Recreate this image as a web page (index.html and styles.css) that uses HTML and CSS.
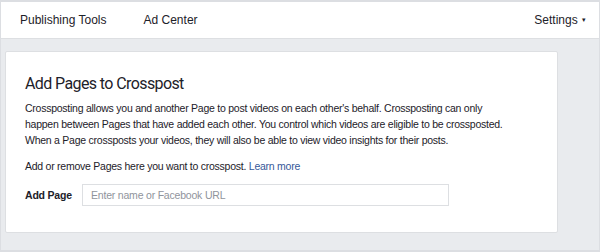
FILE: index.html
```html
<!DOCTYPE html>
<html lang="en">

<head>
    <meta charset="UTF-8">
    <title>Crosspost Settings</title>
    <link rel="stylesheet" href="styles.css">
</head>

<body>
    <div class="frame">
        <nav class="topbar">
            <a href="#" class="nav-link">Publishing Tools</a>
            <a href="#" class="nav-link">Ad Center</a>
            <a href="#" class="nav-link settings">Settings <span class="caret">&#9662;</span></a>
        </nav>

        <div class="content">
            <div class="card">
                <h1 class="card-title">Add Pages to Crosspost</h1>
                <p class="text">
                    Crossposting allows you and another Page to post videos on each other's behalf. Crossposting can only<br>
                    happen between Pages that have added each other. You control which videos are eligible to be crossposted.<br>
                    When a Page crossposts your videos, they will also be able to view video insights for their posts.
                </p>
                <p class="text">
                    Add or remove Pages here you want to crosspost. <a href="#" class="link">Learn more</a>
                </p>
                <div class="field">
                    <label for="page" class="field-label">Add Page</label>
                    <input type="text" id="page" name="page" placeholder="Enter name or Facebook URL">
                </div>
            </div>
        </div>
    </div>
</body>

</html>
```

FILE: styles.css
```css
* {
    box-sizing: border-box;
    padding: 0;
    margin: 0;
}

body {
    background-color: #dcdee2;
    font-family: "Liberation Sans", Arial, Helvetica, sans-serif;
    color: #1d2129;
    padding: 2px 1px 2px 1px;
    height: 252px;
    overflow: hidden;
}

.frame {
    background-color: #e9ebee;
    height: 248px;
}

.topbar {
    display: flex;
    align-items: center;
    height: 37px;
    padding: 0 13px 0 19px;
    background-color: white;
    border-bottom: 1px solid #dddfe2;
    font-size: 12px;
}

.nav-link {
    text-decoration: none;
    color: #1d2129;
    margin-right: 37px;
}

.settings {
    margin-left: auto;
    margin-right: 0;
}

.caret {
    font-size: 7px;
    vertical-align: 2px;
    margin-left: 1px;
}

.content {
    padding: 12px 41px 0 4px;
}

.card {
    background-color: white;
    border: 1px solid #dddfe2;
    border-radius: 2px;
    padding: 22px 19px 26px 19px;
}

.card-title {
    font-family: Roboto, "Liberation Sans", sans-serif;
    font-size: 16px;
    font-weight: normal;
    letter-spacing: -0.6px;
    line-height: 20px;
    margin-bottom: 6px;
}

.text {
    font-size: 10.5px;
    letter-spacing: -0.25px;
    line-height: 16px;
    margin-bottom: 10px;
}

.link {
    color: #365899;
    text-decoration: none;
}

.field {
    display: flex;
    align-items: center;
}

.field-label {
    font-size: 10.5px;
    font-weight: bold;
    letter-spacing: -0.2px;
    width: 57px;
}

input {
    width: 367px;
    height: 22px;
    padding: 0 8px;
    border: 1px solid #dddfe2;
    font-family: inherit;
    font-size: 10.5px;
    letter-spacing: -0.2px;
    color: #1d2129;
}

input::placeholder {
    color: #90949c;
}
```
